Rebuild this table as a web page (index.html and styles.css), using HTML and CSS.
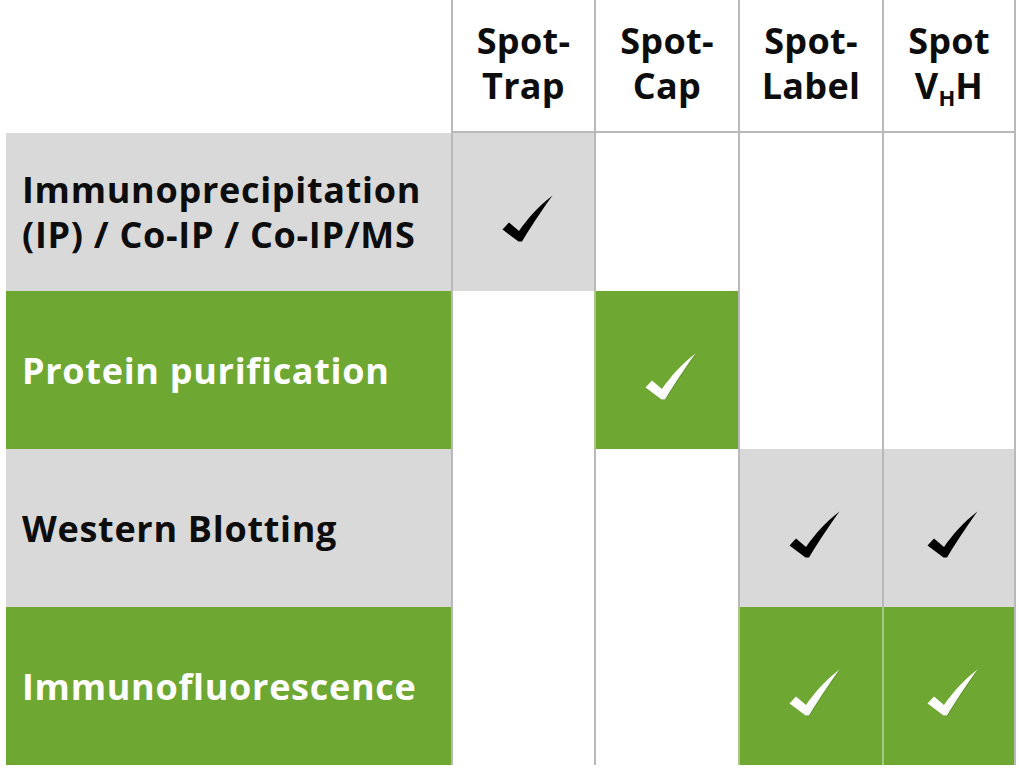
FILE: index.html
```html
<!DOCTYPE html>
<html lang="en">
<head>
<meta charset="utf-8">
<title>Spot products application matrix</title>
<link rel="stylesheet" href="styles.css">
</head>
<body>
<svg class="defs" width="0" height="0" aria-hidden="true">
  <defs>
    <path id="tick" d="M1.5 35.5 L8 28.5 L18 37 C 26 25.5, 37 12.5, 51.5 1.5 C 44 12, 34 26, 21 47.5 L 17.5 47.5 Z"/>
    <linearGradient id="wgrad" x1="0" y1="0" x2="1" y2="1">
      <stop offset="0" stop-color="#ffffff"/>
      <stop offset="0.55" stop-color="#ffffff"/>
      <stop offset="1" stop-color="#d6d6d6"/>
    </linearGradient>
  </defs>
</svg>

<div class="matrix">
  <div class="hcell blank"></div>
  <div class="hcell col"><span>Spot-<br>Trap</span></div>
  <div class="hcell col"><span>Spot-<br>Cap</span></div>
  <div class="hcell col"><span>Spot-<br>Label</span></div>
  <div class="hcell col last"><span>Spot<br>V<sub>H</sub>H</span></div>

  <div class="label gray"><span>Immunoprecipitation<br>(IP) / Co-IP / Co-IP/MS</span></div>
  <div class="cell gray"><svg class="check" viewBox="0 0 54 50"><use href="#tick" fill="#000"/></svg></div>
  <div class="cell"></div>
  <div class="cell"></div>
  <div class="cell last"></div>

  <div class="label green"><span>Protein purification</span></div>
  <div class="cell"></div>
  <div class="cell green"><svg class="check" viewBox="0 0 54 50"><use href="#tick" fill="#5f9229" transform="translate(0.6 0.8)"/><use href="#tick" fill="url(#wgrad)"/></svg></div>
  <div class="cell"></div>
  <div class="cell last"></div>

  <div class="label gray"><span>Western Blotting</span></div>
  <div class="cell"></div>
  <div class="cell"></div>
  <div class="cell gray"><svg class="check" viewBox="0 0 54 50"><use href="#tick" fill="#000"/></svg></div>
  <div class="cell gray last"><svg class="check" viewBox="0 0 54 50"><use href="#tick" fill="#000"/></svg></div>

  <div class="label green"><span>Immunofluorescence</span></div>
  <div class="cell"></div>
  <div class="cell"></div>
  <div class="cell green"><svg class="check" viewBox="0 0 54 50"><use href="#tick" fill="#5f9229" transform="translate(0.6 0.8)"/><use href="#tick" fill="url(#wgrad)"/></svg></div>
  <div class="cell green last"><svg class="check" viewBox="0 0 54 50"><use href="#tick" fill="#5f9229" transform="translate(0.6 0.8)"/><use href="#tick" fill="url(#wgrad)"/></svg></div>
</div>
</body>
</html>
```

FILE: styles.css
```css
html, body {
  margin: 0;
  padding: 0;
  background: #ffffff;
}

body {
  font-family: "Open Sans", "Noto Sans", "Liberation Sans", sans-serif;
  font-weight: 700;
  color: #0d0d0d;
}

.defs {
  position: absolute;
  width: 0;
  height: 0;
  overflow: hidden;
}

.matrix {
  display: grid;
  grid-template-columns: 445px 143px 144px 144px 134px;
  grid-template-rows: 133px repeat(4, 158px);
  margin-left: 6px;
  width: 1010px;
}

.hcell {
  display: flex;
  align-items: center;
  justify-content: center;
  text-align: center;
  font-size: 36px;
  line-height: 45px;
  letter-spacing: 0.3px;
}

.hcell.col {
  border-left: 2px solid #b9b9b9;
  border-bottom: 2px solid #b9b9b9;
  padding-bottom: 5px;
}

.hcell sub {
  font-size: 22px;
  line-height: 0;
  vertical-align: -7px;
  letter-spacing: 0;
}

.hcell.last,
.cell.last {
  border-right: 2px solid #b9b9b9;
}

.label {
  display: flex;
  align-items: center;
  padding-left: 16px;
  font-size: 36px;
  line-height: 45px;
  letter-spacing: 0.7px;
}

.cell {
  display: flex;
  align-items: center;
  justify-content: center;
  border-left: 2px solid #b9b9b9;
  padding: 14px 0 0 8px;
}

.gray {
  background: #d9d9d9;
}

.green {
  background: #6ea832;
  color: #ffffff;
}

.cell.green {
  border-left-color: #a7c883;
}

.cell.green.last {
  border-right-color: #b9b9b9;
}

.check {
  width: 54px;
  height: 50px;
  display: block;
}
```
